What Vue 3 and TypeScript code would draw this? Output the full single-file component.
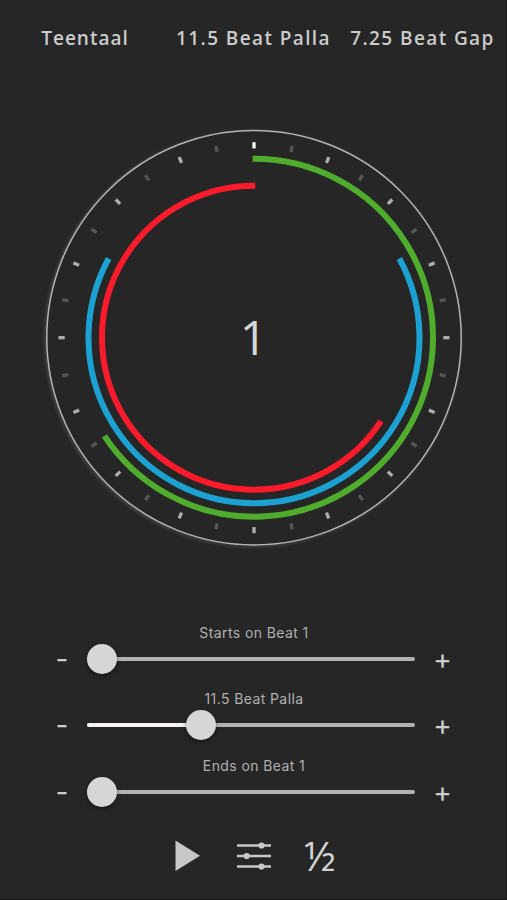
<script setup lang="ts">
import { ref } from 'vue'

interface Arc {
  color: string
  radius: number
  from: number
  to: number
}

interface Control {
  label: string
  value: number
}

const BEATS = 16
const headings: string[] = ['Teentaal', '11.5 Beat Palla', '7.25 Beat Gap']
const currentBeat = ref(1)

const ticks = Array.from({ length: BEATS * 2 }, (_, i) => ({
  angle: (i * 360) / (BEATS * 2),
  kind: i === 0 ? 'first' : i % 2 === 0 ? 'beat' : 'half',
}))

// Positions are measured in beats, clockwise from the top of the dial.
const arcs: Arc[] = [
  { color: '#50ac2c', radius: 179, from: -0.02, to: 10.52 },
  { color: '#1ba2d3', radius: 165.5, from: 2.73, to: 13.27 },
  { color: '#fc1b2b', radius: 152, from: 5.48, to: 16.02 },
]

function point(radius: number, beat: number): string {
  const a = (beat / BEATS) * Math.PI * 2
  return `${(radius * Math.sin(a)).toFixed(3)} ${(-radius * Math.cos(a)).toFixed(3)}`
}

function arcPath(arc: Arc): string {
  const large = arc.to - arc.from > BEATS / 2 ? 1 : 0
  return `M${point(arc.radius, arc.from)}A${arc.radius} ${arc.radius} 0 ${large} 1 ${point(arc.radius, arc.to)}`
}

const controls = ref<Control[]>([
  { label: 'Starts on Beat 1', value: 0 },
  { label: '11.5 Beat Palla', value: 33.3 },
  { label: 'Ends on Beat 1', value: 0 },
])

function step(control: Control, by: number): void {
  control.value = Math.min(100, Math.max(0, control.value + by))
}
</script>

<template>
  <main class="screen">
    <header class="headings">
      <span v-for="h in headings" :key="h" class="heading">{{ h }}</span>
    </header>

    <section class="dial-area">
      <svg class="dial" viewBox="-227 -227.7 454 455">
        <defs>
          <filter id="glow" x="-10%" y="-10%" width="120%" height="120%">
            <feGaussianBlur stdDeviation="1.6" />
          </filter>
        </defs>
        <circle class="rim-glow" cx="-1.2" cy="1" r="207" filter="url(#glow)" />
        <circle class="face" r="207.2" />
        <line
          v-for="t in ticks"
          :key="t.angle"
          :class="['tick', t.kind]"
          x1="0"
          x2="0"
          y1="-195.5"
          y2="-189.3"
          :transform="`rotate(${t.angle})`"
        />
        <path v-for="a in arcs" :key="a.color" class="arc" :d="arcPath(a)" :stroke="a.color" />
        <text class="count" x="-0.6" y="17.3">{{ currentBeat }}</text>
      </svg>
    </section>

    <section class="controls">
      <div v-for="c in controls" :key="c.label" class="control">
        <div class="label">{{ c.label }}</div>
        <div class="row">
          <button class="step minus" @click="step(c, -1)">-</button>
          <div class="slider">
            <div class="fill" :style="{ width: c.value + '%' }"></div>
            <div class="knob"></div>
          </div>
          <button class="step" @click="step(c, 1)">+</button>
        </div>
      </div>
    </section>

    <footer class="toolbar">
      <svg class="play" width="26" height="32" viewBox="0 0 26 32"><path d="M.5.5 25 15.8.5 31Z" /></svg>
      <svg class="mixer" width="36" height="28" viewBox="0 0 36 28">
        <path d="M1 3.5H35M1 14H35M1 24.5H35" />
        <circle cx="25.5" cy="3.5" r="3.1" />
        <circle cx="10.7" cy="14" r="3.1" />
        <circle cx="25.5" cy="24.5" r="3.1" />
      </svg>
      <span class="half-speed">½</span>
    </footer>
  </main>
</template>

<style>
body {
  background: #262626;
}
</style>

<style scoped>
.screen {
  box-sizing: border-box;
  width: 507px;
  height: 900px;
  overflow: hidden;
  display: flex;
  flex-direction: column;
  background: #262626;
  border-right: 1px solid #1d1d1d;
  border-bottom: 1px solid #151515;
  font-family: Inter, 'Liberation Sans', sans-serif;
}
.headings {
  display: grid;
  grid-template-columns: repeat(3, 169px);
  height: 75px;
  align-items: center;
  flex: none;
}
.heading {
  text-align: center;
  font-family: 'Open Sans', 'Noto Sans', sans-serif;
  font-weight: 600;
  font-size: 19px;
  letter-spacing: 1.4px;
  white-space: nowrap;
  color: #cbcbcb;
}
.heading:first-child {
  letter-spacing: 1px;
  padding-left: 1px;
}
.dial-area {
  height: 545px;
  flex: none;
  padding: 35px 0 0 27px;
  box-sizing: border-box;
}
.dial {
  display: block;
  width: 454px;
  height: 455px;
}
.face {
  fill: #262626;
  stroke: #b4b4b4;
  stroke-width: 1.5;
}
.rim-glow {
  fill: none;
  stroke: #444;
  stroke-width: 3;
}
.tick {
  stroke-width: 3.3;
}
.tick.first {
  stroke: #fff;
}
.tick.beat {
  stroke: #aeaeae;
}
.tick.half {
  stroke: #565656;
}
.arc {
  fill: none;
  stroke-width: 6;
}
.count {
  font-family: 'Open Sans', 'Noto Sans', sans-serif;
  font-size: 48px;
  font-weight: 400;
  text-anchor: middle;
  fill: #d6d6d6;
}
.controls {
  display: grid;
  grid-template-rows: repeat(3, 66.4px);
  flex: none;
}
.control {
  padding: 3px 0 0 37px;
}
.label {
  width: 434px;
  height: 20px;
  line-height: 20px;
  text-align: center;
  font-size: 14px;
  letter-spacing: 0.4px;
  color: #b0b0b0;
}
.row {
  display: grid;
  grid-template-columns: 50px 328px 55px;
  height: 32px;
  align-items: center;
}
.step {
  display: block;
  height: 28px;
  padding: 0;
  border: 0;
  background: none;
  font: 400 28px/28px Inter, 'Liberation Sans', sans-serif;
  color: #cdcdcd;
}
.slider {
  display: flex;
  align-items: center;
  height: 4px;
  box-sizing: border-box;
  padding-right: 30px;
  border-radius: 2px;
  background: #b3b3b3;
}
.fill {
  flex: none;
  height: 4px;
  border-radius: 2px 0 0 2px;
  background: #f4f2f2;
}
.knob {
  flex: none;
  width: 30px;
  height: 30px;
  border-radius: 50%;
  background: #d6d6d6;
  box-shadow: 0 2px 5px rgba(0, 0, 0, 0.4);
}
.toolbar {
  display: flex;
  align-items: center;
  height: 74px;
  padding-left: 175px;
  flex: none;
}
.play {
  fill: #c8c8c8;
}
.mixer {
  margin-left: 35px;
  fill: #c8c8c8;
}
.mixer path {
  fill: none;
  stroke: #c8c8c8;
  stroke-width: 2.3;
}
.half-speed {
  margin-left: 32px;
  padding-bottom: 2px;
  font-family: 'Open Sans', 'Noto Sans', sans-serif;
  font-size: 41px;
  line-height: 50px;
  color: #d2d2d2;
}
</style>
